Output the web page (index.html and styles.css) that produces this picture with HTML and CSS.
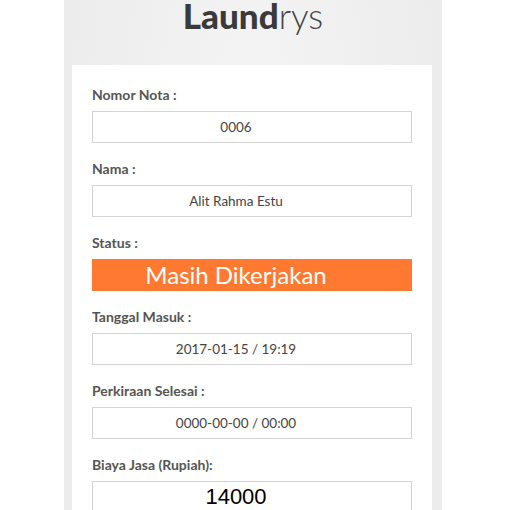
FILE: index.html
```html
<!DOCTYPE html>
<html lang="id">
<head>
  <meta charset="UTF-8">
  <meta name="viewport" content="width=device-width, initial-scale=1.0">
  <title>Cek Status | Laundrys</title>
  <link rel="stylesheet" href="styles.css">
</head>
<body>
  <div class="wrapper">
    <header class="brand">
      <h1><b>Laund</b>rys</h1>
    </header>

    <main class="card">
      <div class="form-group">
        <label>Nomor Nota :</label>
        <div class="field">0006</div>
      </div>

      <div class="form-group">
        <label>Nama :</label>
        <div class="field">Alit Rahma Estu</div>
      </div>

      <div class="form-group">
        <label>Status :</label>
        <div class="field status">Masih Dikerjakan</div>
      </div>

      <div class="form-group">
        <label>Tanggal Masuk :</label>
        <div class="field">2017-01-15 / 19:19</div>
      </div>

      <div class="form-group">
        <label>Perkiraan Selesai :</label>
        <div class="field">0000-00-00 / 00:00</div>
      </div>

      <div class="form-group">
        <label>Biaya Jasa (Rupiah):</label>
        <div class="field price">14000</div>
      </div>
    </main>
  </div>
</body>
</html>
```

FILE: styles.css
```css
body {
  margin: 0;
  background-color: #fff;
  font-family: Lato, "Open Sans", sans-serif;
  overflow: hidden;
}

.wrapper {
  width: 378px;
  margin-left: 64px;
  min-height: 100vh;
  background: radial-gradient(ellipse at 50% 20%, #f4f4f4 0%, #ececec 70%);
}

.brand {
  height: 65px;
  text-align: center;
}

.brand h1 {
  margin: 0;
  font-size: 35px;
  line-height: 30px;
  font-weight: 300;
  color: #444;
}

.brand h1 b {
  font-weight: 900;
  color: #3a3a3a;
}

.card {
  margin: 0 10px 0 8px;
  padding: 22px 20px 20px;
  background-color: #fff;
}

.form-group {
  margin-bottom: 18px;
}

label {
  display: block;
  margin-bottom: 8px;
  font-size: 14px;
  line-height: 16px;
  font-weight: bold;
  color: #555;
}

.field {
  height: 30px;
  padding-right: 32px;
  border: 1px solid #d4d4d4;
  text-align: center;
  font-size: 13.5px;
  line-height: 30px;
  color: #444;
}

.status {
  border-color: #ff7a30;
  background-color: #ff7a30;
  font-size: 24px;
  color: #fff;
}

.price {
  font-family: "Liberation Sans", Arial, sans-serif;
  font-size: 22px;
  color: #000;
}
```
